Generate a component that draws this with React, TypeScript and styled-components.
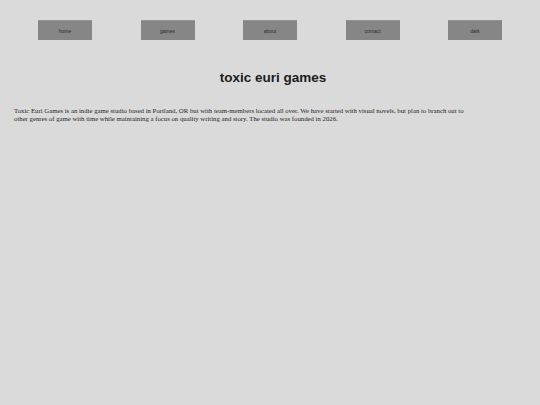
import React from "react";
import styled, { createGlobalStyle } from "styled-components";

const GlobalStyle = createGlobalStyle`
  html, body {
    margin: 0;
    padding: 0;
    background: #dadada;
  }
  body {
    width: 540px;
    height: 405px;
    overflow: hidden;
  }
`;

const Page = styled.div`
  width: 540px;
  min-height: 405px;
  background: #dadada;
  display: flex;
  flex-direction: column;
`;

const NavBar = styled.nav`
  display: flex;
  justify-content: space-between;
  padding: 20px 38px 0;
`;

const NavButton = styled.button`
  width: 54px;
  height: 20px;
  padding: 0;
  margin: 0;
  background: #868686;
  border: none;
  border-top: 1px solid #959595;
  color: #2a2a2a;
  font-family: "Liberation Sans", Arial, sans-serif;
  font-size: 5px;
  cursor: pointer;
`;

const Title = styled.h1`
  margin: 30px 0 0;
  padding-left: 6px;
  text-align: center;
  font-family: "Liberation Sans", Arial, sans-serif;
  font-weight: bold;
  font-size: 13.5px;
  line-height: 16px;
  color: #1c1c1c;
`;

const Intro = styled.p`
  margin: 21px 0 0 14px;
  width: 456px;
  font-family: "Liberation Serif", "Times New Roman", serif;
  font-size: 6.75px;
  line-height: 8px;
  color: #1e1e1e;
`;

const links = ["home", "games", "about", "contact", "dark"];

export default function App() {
  return (
    <Page>
      <GlobalStyle />
      <NavBar>
        {links.map((l) => (
          <NavButton key={l}>{l}</NavButton>
        ))}
      </NavBar>
      <Title>toxic euri games</Title>
      <Intro>
        Toxic Euri Games is an indie game studio based in Portland, OR but with
        team-members located all over. We have started with visual novels, but
        plan to branch out to other genres of game with time while maintaining a
        focus on quality writing and story. The studio was founded in 2026.
      </Intro>
    </Page>
  );
}
